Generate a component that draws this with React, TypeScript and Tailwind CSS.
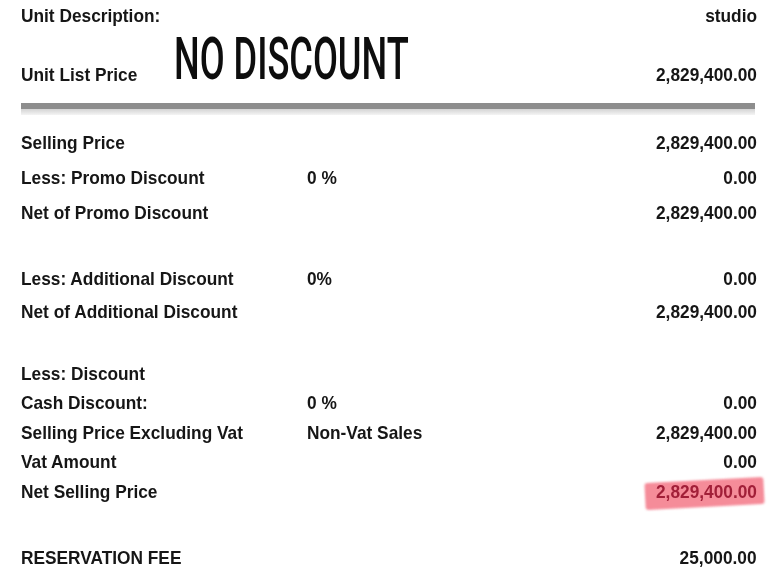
import React from "react";

function L({ children }: { children: React.ReactNode }) {
  return <span className="inline-block origin-left scale-x-[0.91] whitespace-nowrap">{children}</span>;
}
function R({ children }: { children: React.ReactNode }) {
  return <span className="inline-block origin-right scale-x-[0.91] whitespace-nowrap">{children}</span>;
}

type RowProps = { label: string; mid?: string; value?: string; h: number; highlight?: boolean };

function Row({ label, mid, value, h, highlight }: RowProps) {
  return (
    <div className="grid grid-cols-[286px_1fr_auto] leading-[30px]" style={{ height: h }}>
      <div>
        <L>{label}</L>
      </div>
      <div>{mid ? <L>{mid}</L> : null}</div>
      <div className="text-right">
        {value ? (
          highlight ? (
            <span className="relative inline-block">
              <span className="absolute left-[-1px] right-[-7px] top-[3px] bottom-[0px] -rotate-3 rounded-[3px] bg-[#f4808f] opacity-90 blur-[0.8px]" />
              <span className="relative inline-block origin-right scale-x-[0.91] whitespace-nowrap text-[#a11f38]">{value}</span>
            </span>
          ) : (
            <R>{value}</R>
          )
        ) : null}
      </div>
    </div>
  );
}

export default function App() {
  return (
    <div className="w-[768px] h-[576px] overflow-hidden bg-white text-[#161616] font-['Liberation_Sans',Arial,sans-serif] font-bold text-[19px]">
      <div className="pl-[21px] pr-[11px] pt-[1px]">
        <div className="flex justify-between h-[33px] leading-[30px]">
          <L>Unit Description:</L>
          <R>studio</R>
        </div>
        <div className="flex justify-between items-end h-[56px]">
          <div className="flex items-end">
            <div className="w-[153px] h-[30px] leading-[30px]">
              <L>Unit List Price</L>
            </div>
            <span className="inline-block mb-[2px] origin-left scale-x-[0.613] whitespace-nowrap font-['Roboto',sans-serif] font-medium text-[59px] leading-[59px] text-[#0d0d0d]">
              NO DISCOUNT
            </span>
          </div>
          <div className="h-[30px] leading-[30px]">
            <R>2,829,400.00</R>
          </div>
        </div>
        <div className="mt-[13px]">
          <div className="h-[6px] bg-[#8d8d8d] mr-[2px]" />
          <div className="h-[6px] bg-gradient-to-b from-[#d4d4d4] to-[#f4f4f4] mr-[2px]" />
        </div>
        <div className="mt-[13px]">
          <Row label="Selling Price" value="2,829,400.00" h={35} />
          <Row label="Less: Promo Discount" mid="0 %" value="0.00" h={35} />
          <Row label="Net of Promo Discount" value="2,829,400.00" h={66} />
          <Row label="Less: Additional Discount" mid="0%" value="0.00" h={33} />
          <Row label="Net of Additional Discount" value="2,829,400.00" h={62} />
          <Row label="Less: Discount" h={29} />
          <Row label="Cash Discount:" mid="0 %" value="0.00" h={30} />
          <Row label="Selling Price Excluding Vat" mid="Non-Vat Sales" value="2,829,400.00" h={29} />
          <Row label="Vat Amount" value="0.00" h={30} />
          <Row label="Net Selling Price" value="2,829,400.00" h={66} highlight />
          <Row label="RESERVATION FEE" value="25,000.00" h={30} />
        </div>
      </div>
    </div>
  );
}
